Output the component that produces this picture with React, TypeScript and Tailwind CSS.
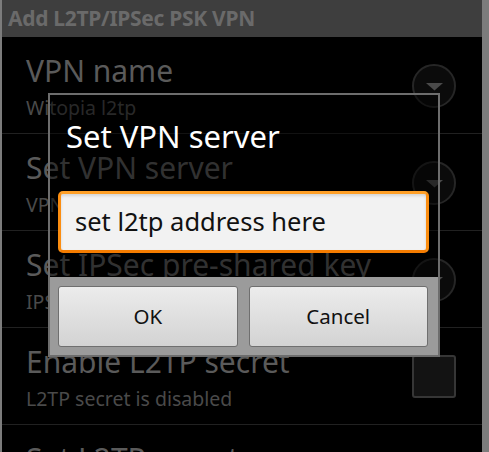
const rows = [
  { title: 'VPN name', sub: 'Witopia l2tp', widget: 'spinner' },
  { title: 'Set VPN server', sub: 'VPN server is not set', widget: 'spinner' },
  { title: 'Set IPSec pre-shared key', sub: 'IPSec pre-shared key is not set', widget: 'spinner' },
  { title: 'Enable L2TP secret', sub: 'L2TP secret is disabled', widget: 'checkbox' },
  { title: 'Set L2TP secret', sub: 'L2TP secret not set', widget: 'spinner' },
]

function Spinner() {
  return (
    <div className="flex h-[44px] w-[44px] items-center justify-center rounded-full border-2 border-[#262626] bg-[#0b0b0b]">
      <svg width="17" height="8" viewBox="0 0 17 8" className="mt-[2px]">
        <path d="M0 0 L17 0 L8.5 7.5 Z" fill="#4a4a4a" />
      </svg>
    </div>
  )
}

function Checkbox() {
  return <div className="h-[43px] w-[44px] rounded-[3px] border-2 border-[#363636] bg-[#131313]" />
}

export default function App() {
  return (
    <div className="relative flex h-[452px] w-[489px] overflow-hidden bg-[#7c7c7c] font-['Noto_Sans',sans-serif]">
      <div className="ml-[2px] flex w-[480px] flex-col bg-black">
        <div className="flex h-[37px] shrink-0 items-center bg-[#3e3e3e] pl-[6px]">
          <span className="text-[21px] font-bold leading-none tracking-[-0.3px] text-[#6a6a6a]">
            Add L2TP/IPSec PSK VPN
          </span>
        </div>

        {rows.map((r) => (
          <div key={r.title} className="flex h-[97px] shrink-0 border-b border-[#212121]">
            <div className="flex-1 pl-[24px] pt-[16px]">
              <div className="whitespace-nowrap text-[30px] leading-[36px] text-[#5a5a5a]">{r.title}</div>
              <div className="mt-[6px] whitespace-nowrap text-[19.5px] leading-[26px] text-[#4a4a4a]">{r.sub}</div>
            </div>
            <div className="flex items-center pr-[26px] pt-[1px]">
              {r.widget === 'spinner' ? <Spinner /> : <Checkbox />}
            </div>
          </div>
        ))}
      </div>

      <div className="absolute left-[48px] top-[93px] flex h-[264px] w-[392px] flex-col border-2 border-[#6d6d6d] bg-black/45">
        <div className="pl-[16px] pt-[21px] text-[31px] leading-[40px] text-white">Set VPN server</div>
        <div className="px-[8px] pr-[9px] pt-[35px]">
          <div className="flex h-[62px] items-center rounded-[5px] border-[3px] border-t-[#ffa028] border-x-[#fb8d10] border-b-[#f57c00] bg-[#f2f2f2] pl-[14px] shadow-[inset_0_2px_3px_rgba(0,0,0,0.12)]">
            <span className="text-[25.5px] leading-none text-[#111]">set l2tp address here</span>
          </div>
        </div>
        <div className="mt-auto flex h-[78px] gap-[11px] bg-[#9b9b9b] pb-[8px] pl-[8px] pr-[10px] pt-[9px]">
          <button className="flex flex-1 items-center justify-center rounded-[3px] border border-[#6f6f6f] bg-gradient-to-b from-[#ececec] to-[#d3d3d3] text-[20.5px] text-[#111]">
            OK
          </button>
          <button className="flex flex-1 items-center justify-center rounded-[3px] border border-[#6f6f6f] bg-gradient-to-b from-[#ececec] to-[#d3d3d3] text-[20.5px] text-[#111]">
            Cancel
          </button>
        </div>
      </div>
    </div>
  )
}
